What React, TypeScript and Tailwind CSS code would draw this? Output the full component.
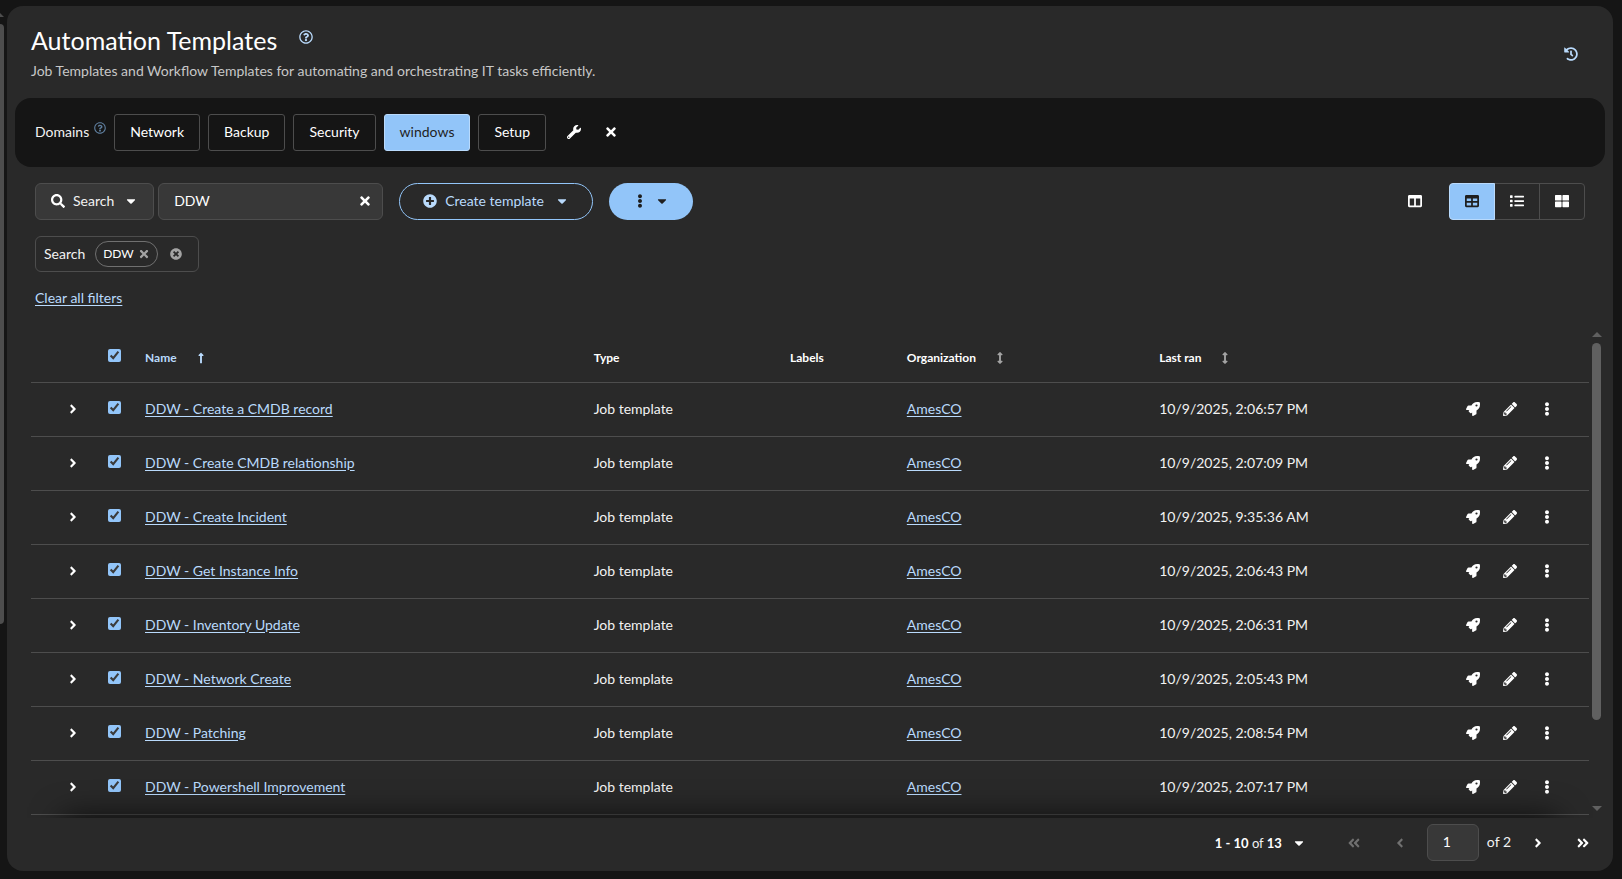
import { useState } from 'react';
import type { ReactNode } from 'react';
import {
  FaAngleDoubleLeft,
  FaAngleDoubleRight,
  FaAngleLeft,
  FaAngleRight,
  FaArrowsAltV,
  FaCaretDown,
  FaColumns,
  FaEllipsisV,
  FaHistory,
  FaList,
  FaLongArrowAltUp,
  FaPencilAlt,
  FaPlusCircle,
  FaRegQuestionCircle,
  FaRocket,
  FaSearch,
  FaTable,
  FaThLarge,
  FaTimes,
  FaTimesCircle,
  FaWrench,
} from 'react-icons/fa';

const domains = ['Network', 'Backup', 'Security', 'windows', 'Setup'];

const templates = [
  { name: 'DDW - Create a CMDB record', ran: '10/9/2025, 2:06:57 PM' },
  { name: 'DDW - Create CMDB relationship', ran: '10/9/2025, 2:07:09 PM' },
  { name: 'DDW - Create Incident', ran: '10/9/2025, 9:35:36 AM' },
  { name: 'DDW - Get Instance Info', ran: '10/9/2025, 2:06:43 PM' },
  { name: 'DDW - Inventory Update', ran: '10/9/2025, 2:06:31 PM' },
  { name: 'DDW - Network Create', ran: '10/9/2025, 2:05:43 PM' },
  { name: 'DDW - Patching', ran: '10/9/2025, 2:08:54 PM' },
  { name: 'DDW - Powershell Improvement', ran: '10/9/2025, 2:07:17 PM' },
];

function IconButton({ label, className = '', disabled, children }: { label: string; className?: string; disabled?: boolean; children: ReactNode }) {
  return (
    <button type="button" aria-label={label} disabled={disabled} className={`flex h-8 items-center justify-center ${className}`}>
      {children}
    </button>
  );
}

function Checkbox({ label }: { label: string }) {
  return (
    <input
      type="checkbox"
      aria-label={label}
      defaultChecked
      className="mb-[3px] block size-[13px] accent-[#92c5f9]"
    />
  );
}

function Header() {
  return (
    <header className="flex items-center justify-between px-6 pt-[18px] pb-4">
      <div>
        <div className="flex items-start">
          <h1 className="text-[25px] leading-8 text-white">Automation Templates</h1>
          <button type="button" aria-label="About automation templates" className="ml-[22px] pt-1.5 text-[#b9dafc]">
            <FaRegQuestionCircle size={14} />
          </button>
        </div>
        <p className="mt-[5px] mb-px leading-5 text-[#c7c7c7]">
          Job Templates and Workflow Templates for automating and orchestrating IT tasks efficiently.
        </p>
      </div>
      <IconButton label="Activity stream" className="mt-0.5 mr-[11px] text-[#b9dafc]">
        <FaHistory size={14} />
      </IconButton>
    </header>
  );
}

function DomainBar() {
  const [active, setActive] = useState('windows');
  return (
    <nav aria-label="Domains" className="mx-2 flex items-center rounded-2xl bg-[#151515] px-5 py-4">
      <span className="pb-0.5">Domains</span>
      <button type="button" aria-label="About domains" className="mr-2 mb-2.5 ml-[5px] text-[#5f7f9f]">
        <FaRegQuestionCircle size={12} />
      </button>
      <div className="flex gap-2">
        {domains.map((name) => (
          <button
            key={name}
            type="button"
            aria-pressed={active === name}
            onClick={() => setActive(name)}
            className={`h-[37px] rounded-[3px] border px-[15px] pb-0.5 ${
              active === name ? 'border-[#b9dafc] bg-[#92c5f9] text-[#1f1f1f]' : 'border-[#4d4d4d] text-white'
            }`}
          >
            {name}
          </button>
        ))}
      </div>
      <IconButton label="Manage domains" className="ml-[21px] pb-0.5 text-white">
        <FaWrench size={14} />
      </IconButton>
      <IconButton label="Clear domain" className="ml-[23px] pb-0.5 text-white">
        <FaTimes size={14} />
      </IconButton>
    </nav>
  );
}

function Toolbar() {
  return (
    <section aria-label="Toolbar" className="flex flex-col gap-4 px-7 pt-4">
      <div className="flex items-center justify-between">
        <div className="flex items-center gap-4">
          <div className="flex items-center gap-1">
            <button type="button" className="flex h-[37px] items-center gap-2 rounded-md border border-[#4d4d4d] bg-[#383838] px-[15px] pb-0.5">
              <FaSearch size={14} className="text-white" />
              Search
              <FaCaretDown size={14} className="ml-0.5 text-white" />
            </button>
            <div className="flex h-[37px] w-[225px] items-center rounded-md border border-[#4d4d4d] bg-[#383838] pr-2.5 pb-0.5 pl-[15px]">
              <input aria-label="Search term" defaultValue="DDW" className="min-w-0 flex-1 bg-transparent text-white outline-none" />
              <button type="button" aria-label="Clear search" className="text-white">
                <FaTimes size={14} />
              </button>
            </div>
          </div>
          <button type="button" className="flex h-[37px] items-center gap-2 rounded-full border border-[#92c5f9] px-[23px] pb-0.5 text-[#b9dafc]">
            <FaPlusCircle size={14} />
            Create template
            <FaCaretDown size={14} className="ml-[3px]" />
          </button>
          <button type="button" aria-label="Bulk actions" className="flex h-[37px] items-center gap-2 rounded-full bg-[#92c5f9] px-6 pb-0.5 text-[#1f1f1f]">
            <FaEllipsisV size={14} />
            <FaCaretDown size={14} />
          </button>
        </div>
        <div className="flex items-center">
          <IconButton label="Manage columns" className="mr-[27px] pb-0.5 text-white">
            <FaColumns size={14} />
          </IconButton>
          <div className="flex h-[37px] rounded-[4px] border border-[#4d4d4d] text-white">
            <button type="button" aria-label="Table view" aria-pressed="true" className="-m-px flex w-[46px] items-center justify-center rounded-l-[4px] border border-[#b9dafc] bg-[#92c5f9] pb-0.5 text-[#1f1f1f]">
              <FaTable size={14} />
            </button>
            <button type="button" aria-label="List view" className="flex w-[46px] items-center justify-center border-r border-[#4d4d4d] pb-0.5">
              <FaList size={14} />
            </button>
            <button type="button" aria-label="Card view" className="flex w-11 items-center justify-center pb-0.5">
              <FaThLarge size={14} />
            </button>
          </div>
        </div>
      </div>
      <div className="flex">
        <div className="flex h-9 items-center rounded-md border border-[#4d4d4d] pr-4 pl-2">
          <span className="pb-px">Search</span>
          <span className="ml-2.5 flex h-[26px] items-center gap-1 rounded-full border border-[#707070] px-[7px] text-[12px] text-white">
            DDW
            <button type="button" aria-label="Remove DDW" className="text-[#a3a3a3]">
              <FaTimes size={12} />
            </button>
          </span>
          <button type="button" aria-label="Remove search filters" className="ml-3 text-[#a3a3a3]">
            <FaTimesCircle size={12} />
          </button>
        </div>
      </div>
      <div className="leading-5">
        <button type="button" className="text-[#b9dafc] underline underline-offset-2">
          Clear all filters
        </button>
      </div>
    </section>
  );
}

function TemplateTable() {
  return (
    <div className="relative mt-6 flex overflow-hidden pb-[3px] pl-6">
      <table className="w-full table-fixed border-separate border-spacing-0 text-left">
        <colgroup>
          <col className="w-[77px]" />
          <col className="w-[37px]" />
          <col className="w-[28.8%]" />
          <col className="w-[12.6%]" />
          <col className="w-[7.5%]" />
          <col className="w-[16.2%]" />
          <col />
          <col className="w-[140px]" />
        </colgroup>
        <thead>
          <tr className="h-[51px] text-[12px] font-bold text-white *:border-b *:border-[#4d4d4d] *:px-0 *:pt-0.5 *:pb-0">
            <td />
            <th><div className="pb-0.5"><Checkbox label="Select all" /></div></th>
            <th aria-sort="ascending">
              <button type="button" className="flex items-center gap-[18px] text-[#b9dafc]">
                Name
                <FaLongArrowAltUp size={12} />
              </button>
            </th>
            <th>Type</th>
            <th>Labels</th>
            <th>
              <button type="button" className="flex items-center gap-[18px]">
                Organization
                <FaArrowsAltV size={12} className="text-[#a3a3a3]" />
              </button>
            </th>
            <th>
              <button type="button" className="flex items-center gap-[18px]">
                Last ran
                <FaArrowsAltV size={12} className="text-[#a3a3a3]" />
              </button>
            </th>
            <td />
          </tr>
        </thead>
        <tbody>
          {templates.map((row) => (
            <tr key={row.name} className="h-[54px] *:border-b *:border-[#4d4d4d] *:px-0 *:pt-0 *:pb-0.5">
              <td>
                <IconButton label={`Expand ${row.name}`} className="ml-[34px] w-4 text-white">
                  <FaAngleRight size={14} />
                </IconButton>
              </td>
              <td><Checkbox label={`Select ${row.name}`} /></td>
              <td><a href="#template" className="text-[#b9dafc] underline underline-offset-2">{row.name}</a></td>
              <td>Job template</td>
              <td />
              <td><a href="#organization" className="text-[#b9dafc] underline underline-offset-2">AmesCO</a></td>
              <td>{row.ran}</td>
              <td>
                <div className="flex gap-[23px] pl-[17px] text-white">
                  <IconButton label="Launch template"><FaRocket size={14} /></IconButton>
                  <IconButton label="Edit template"><FaPencilAlt size={14} /></IconButton>
                  <IconButton label="More actions"><FaEllipsisV size={14} /></IconButton>
                </div>
              </td>
            </tr>
          ))}
        </tbody>
      </table>
      <div aria-hidden="true" className="mr-3 ml-[3px] flex w-[9px] shrink-0 flex-col items-center">
        <span className="h-0 w-0 border-x-[5px] border-b-[5px] border-x-transparent border-b-[#606060]" />
        <span className="mt-1.5 h-[377px] w-[9px] rounded-full bg-[#606060]" />
        <span className="mt-auto mb-1 h-0 w-0 border-x-[5px] border-t-[5px] border-x-transparent border-t-[#606060]" />
      </div>
      <div aria-hidden="true" className="pointer-events-none absolute top-full right-14 left-14 h-16 shadow-[0_0_32px_0_rgba(0,0,0,0.75)]" />
    </div>
  );
}

function Pagination() {
  return (
    <nav aria-label="Pagination" className="flex items-center justify-end pt-1.5 pr-[23px] pb-2.5">
      <button type="button" className="flex items-center text-[13px]">
        <span><b className="text-white">1 - 10</b> of <b className="text-white">13</b></span>
        <FaCaretDown size={14} className="ml-2.5 text-white" />
      </button>
      <IconButton label="First page" disabled className="ml-[41px] text-[#707070]"><FaAngleDoubleLeft size={14} /></IconButton>
      <IconButton label="Previous page" disabled className="ml-8 text-[#707070]"><FaAngleLeft size={14} /></IconButton>
      <input aria-label="Current page" defaultValue="1" className="ml-5 h-[37px] w-[52px] rounded-md border border-[#4d4d4d] bg-[#383838] px-[15px] pb-0.5 text-white" />
      <span className="ml-2 pb-px">of 2</span>
      <IconButton label="Next page" className="ml-5 text-white"><FaAngleRight size={14} /></IconButton>
      <IconButton label="Last page" className="ml-[31px] text-white"><FaAngleDoubleRight size={14} /></IconButton>
    </nav>
  );
}

export default function App() {
  return (
    <div className="flex min-h-screen bg-[#151515] pt-1.5 pr-[9px] pb-2 font-['Lato',sans-serif] text-[14px] leading-5 text-[#f2f2f2]">
      <div aria-hidden="true" className="mr-[3px] w-1 shrink-0 overflow-hidden">
        <span className="mt-1.5 -ml-1.5 block h-0 w-0 border-x-[5px] border-b-[5px] border-x-transparent border-b-[#4d4d4d]" />
        <span className="mt-[7px] block h-[600px] rounded-r-full bg-[#4d4d4d]" />
      </div>
      <main className="flex min-w-0 flex-1 flex-col rounded-2xl bg-[#292929]">
        <Header />
        <DomainBar />
        <Toolbar />
        <TemplateTable />
        <Pagination />
      </main>
    </div>
  );
}
